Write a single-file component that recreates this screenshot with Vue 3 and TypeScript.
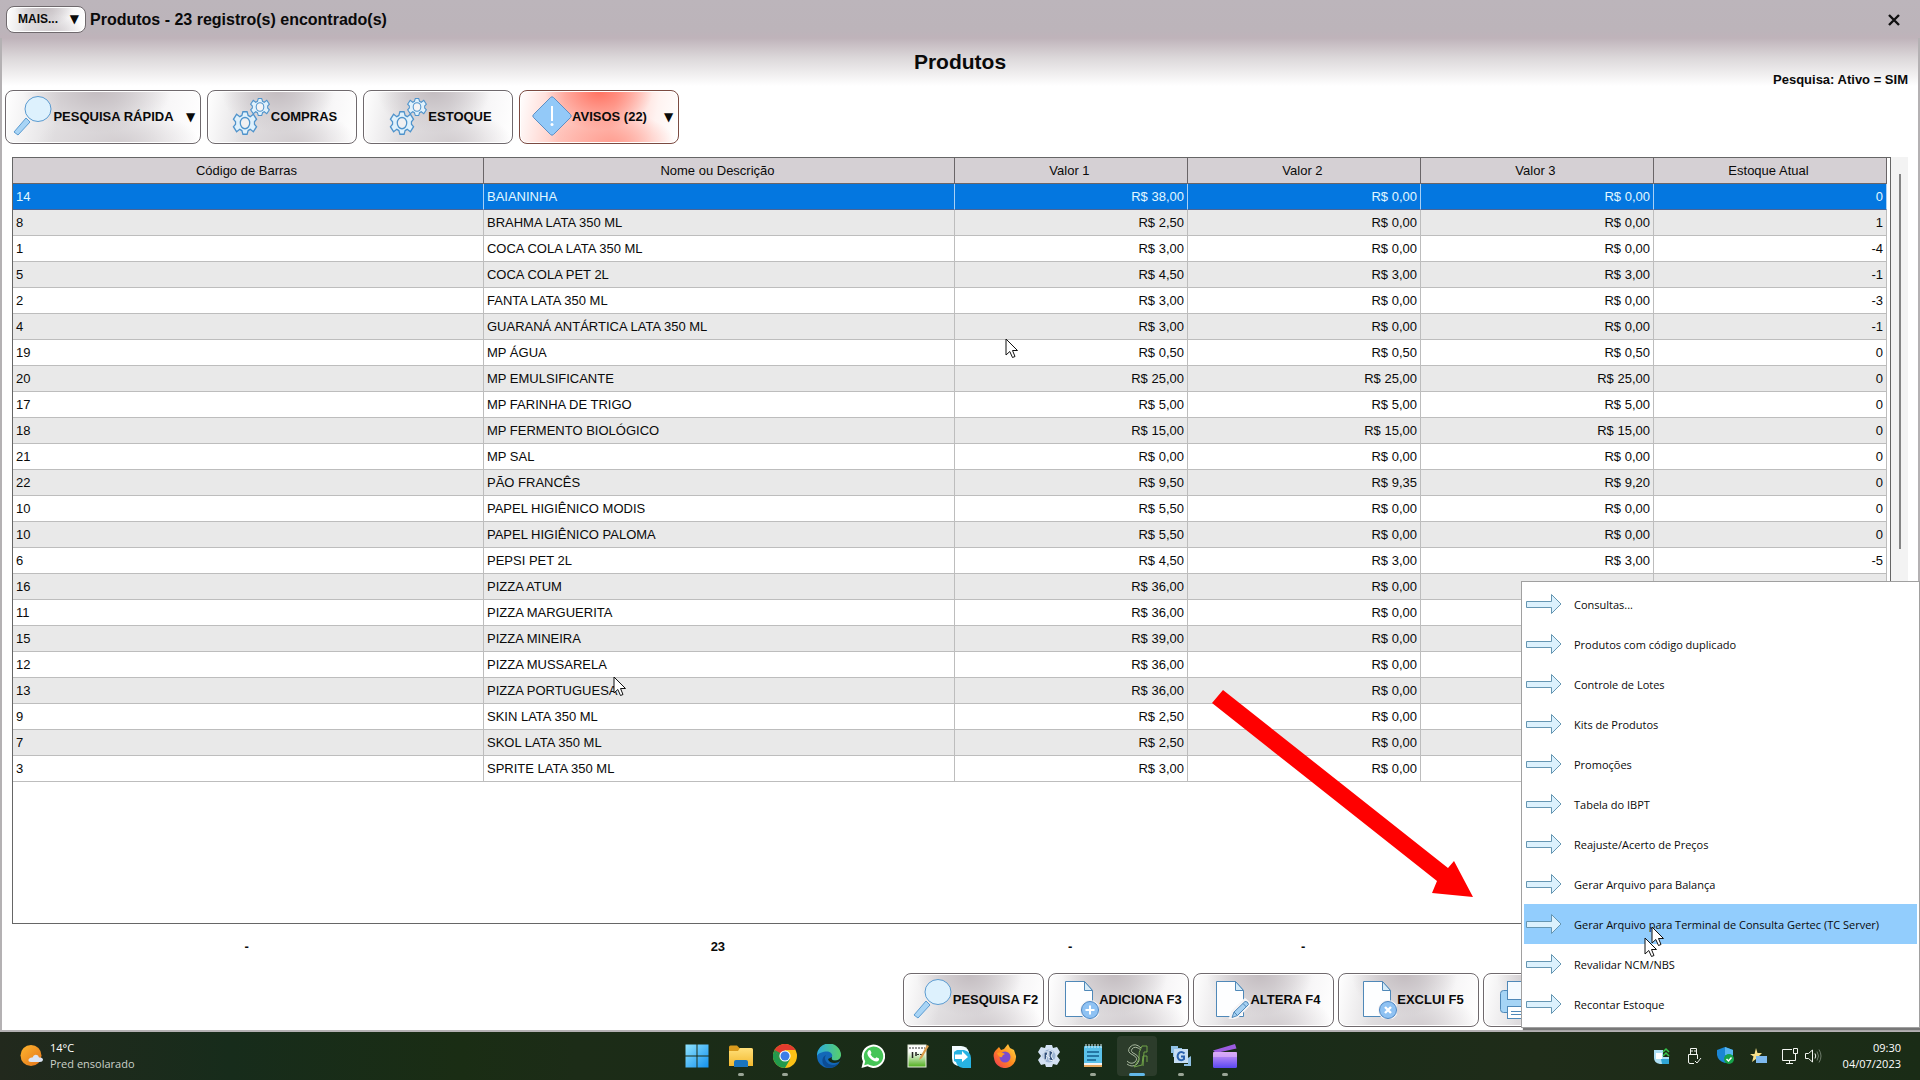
<script setup lang="ts">
interface Product {
  code: string
  name: string
  v1: string
  v2: string
  v3?: string
  stock?: number
}

const p = (code: string, name: string, v1: string, v2: string, v3?: string, stock?: number): Product => ({
  code, name, v1, v2, v3, stock,
})
const money = (v?: string): string => (v === undefined ? '' : `R$ ${v}`)

const products: Product[] = [
  p('14', 'BAIANINHA', '38,00', '0,00', '0,00', 0),
  p('8', 'BRAHMA LATA 350 ML', '2,50', '0,00', '0,00', 1),
  p('1', 'COCA COLA LATA 350 ML', '3,00', '0,00', '0,00', -4),
  p('5', 'COCA COLA PET 2L', '4,50', '3,00', '3,00', -1),
  p('2', 'FANTA LATA 350 ML', '3,00', '0,00', '0,00', -3),
  p('4', 'GUARANÁ ANTÁRTICA LATA 350 ML', '3,00', '0,00', '0,00', -1),
  p('19', 'MP ÁGUA', '0,50', '0,50', '0,50', 0),
  p('20', 'MP EMULSIFICANTE', '25,00', '25,00', '25,00', 0),
  p('17', 'MP FARINHA DE TRIGO', '5,00', '5,00', '5,00', 0),
  p('18', 'MP FERMENTO BIOLÓGICO', '15,00', '15,00', '15,00', 0),
  p('21', 'MP SAL', '0,00', '0,00', '0,00', 0),
  p('22', 'PÃO FRANCÊS', '9,50', '9,35', '9,20', 0),
  p('10', 'PAPEL HIGIÊNICO MODIS', '5,50', '0,00', '0,00', 0),
  p('10', 'PAPEL HIGIÊNICO PALOMA', '5,50', '0,00', '0,00', 0),
  p('6', 'PEPSI PET 2L', '4,50', '3,00', '3,00', -5),
  p('16', 'PIZZA ATUM', '36,00', '0,00'),
  p('11', 'PIZZA MARGUERITA', '36,00', '0,00'),
  p('15', 'PIZZA MINEIRA', '39,00', '0,00'),
  p('12', 'PIZZA MUSSARELA', '36,00', '0,00'),
  p('13', 'PIZZA PORTUGUESA', '36,00', '0,00'),
  p('9', 'SKIN LATA 350 ML', '2,50', '0,00'),
  p('7', 'SKOL LATA 350 ML', '2,50', '0,00'),
  p('3', 'SPRITE LATA 350 ML', '3,00', '0,00'),
]

const columns = ['Código de Barras', 'Nome ou Descrição', 'Valor 1', 'Valor 2', 'Valor 3', 'Estoque Atual']
const totals = ['-', '23', '-', '-']

const tools = [
  { label: 'PESQUISA RÁPIDA', icon: 'search', kind: 'wide', drop: true },
  { label: 'COMPRAS', icon: 'gears', kind: 'plain', drop: false },
  { label: 'ESTOQUE', icon: 'gears', kind: 'plain', drop: false },
  { label: 'AVISOS (22)', icon: 'warn', kind: 'alert', drop: true },
]

const actions = [
  { label: 'PESQUISA F2', icon: 'search' },
  { label: 'ADICIONA F3', icon: 'doc-add' },
  { label: 'ALTERA F4', icon: 'doc-edit' },
  { label: 'EXCLUI F5', icon: 'doc-del' },
]

const menu = [
  'Consultas...',
  'Produtos com código duplicado',
  'Controle de Lotes',
  'Kits de Produtos',
  'Promoções',
  'Tabela do IBPT',
  'Reajuste/Acerto de Preços',
  'Gerar Arquivo para Balança',
  'Gerar Arquivo para Terminal de Consulta Gertec (TC Server)',
  'Revalidar NCM/NBS',
  'Recontar Estoque',
]
const activeItem = 8

const apps = [
  { id: 'windows', state: '' },
  { id: 'explorer', state: 'open' },
  { id: 'chrome', state: 'open' },
  { id: 'edge', state: '' },
  { id: 'whatsapp', state: '' },
  { id: 'editor', state: '' },
  { id: 'remote', state: '' },
  { id: 'firefox', state: '' },
  { id: 'cog', state: '' },
  { id: 'notepad', state: 'open' },
  { id: 'sg', state: 'active' },
  { id: 'gsync', state: 'open' },
  { id: 'clip', state: 'open' },
]
const tray = ['tray-remote', 'tray-usb', 'tray-shield', 'tray-star']
</script>

<template>
  <div class="desktop">
    <svg class="defs" width="0" height="0" aria-hidden="true">
      <defs>
        <linearGradient id="gWin" x1="0" y1="0" x2="1" y2="1"><stop offset="0" stop-color="#8fe3ff" /><stop offset="1" stop-color="#1391ee" /></linearGradient>
        <linearGradient id="gFolder" x1="0" y1="0" x2="0" y2="1"><stop offset="0" stop-color="#ffe07a" /><stop offset="1" stop-color="#f3b92f" /></linearGradient>
        <linearGradient id="gEdge" x1="0" y1="0" x2="1" y2="0"><stop offset="0" stop-color="#2aa9e0" /><stop offset="1" stop-color="#58d06a" /></linearGradient>
        <linearGradient id="gFox" x1="1" y1="0" x2="0" y2="1"><stop offset="0" stop-color="#ffe14a" /><stop offset="0.5" stop-color="#ff8a1e" /><stop offset="1" stop-color="#f0305c" /></linearGradient>
        <linearGradient id="gClip" x1="0" y1="0" x2="0" y2="1"><stop offset="0" stop-color="#d59bf5" /><stop offset="1" stop-color="#5a48f0" /></linearGradient>
        <linearGradient id="gGreen" x1="0" y1="0" x2="0" y2="1"><stop offset="0.3" stop-color="#ffffff" /><stop offset="1" stop-color="#4fae1c" /></linearGradient>
        <linearGradient id="gSun" x1="0" y1="0" x2="1" y2="1"><stop offset="0" stop-color="#ffb52e" /><stop offset="1" stop-color="#e2741b" /></linearGradient>
        <path id="gearShape" d="M-2-9h4l1 3 2 1 3-2 3 4-2 2v2l2 2-3 4-3-2-2 1-1 3h-4l-1-3-2-1-3 2-3-4 2-2v-2l-2-2 3-4 3 2 2-1z" />
      </defs>
      <symbol id="search" viewBox="0 0 40 40">
        <path d="M13 22 17 26 5 39 1 36Z" fill="#a8d4f5" stroke="#5b9bd0" />
        <ellipse cx="25" cy="13" rx="13" ry="12.5" fill="#ddf1fd" stroke="#5b9bd0" />
      </symbol>
      <symbol id="gears" viewBox="0 0 40 40" fill="#dff1fc" stroke="#4f93cb" stroke-width="1.2">
        <g transform="translate(29 11) scale(0.85 0.95)"><use href="#gearShape" /><circle r="4.5" fill="#f4f4f5" /></g>
        <g transform="translate(14 27) scale(1.05 1.25)"><use href="#gearShape" /><circle r="4.500" fill="#f1f0f1" /></g>
      </symbol>
      <symbol id="warn" viewBox="0 0 40 40">
        <path d="M18.500 1.500Q20 0 21.500 1.500L38.500 18.500Q40 20 38.500 21.500L21.500 38.500Q20 40 18.500 38.500L1.500 21.500Q0 20 1.500 18.500Z" fill="#93c9f8" stroke="#5d8fc4" />
        <path d="M20 10V25" stroke="#fff" stroke-width="2" /><circle cx="20" cy="28.500" r="1.500" fill="#fff" />
      </symbol>
      <symbol id="page" viewBox="0 0 40 40">
        <path d="M6.500 2.500H25.500L33.500 11.500V37.500H6.500Z" fill="#fdfeff" stroke="#4f88b8" />
        <path d="M25.500 2.500V11.500H33.500Z" fill="#d5ebf8" stroke="#4f88b8" />
      </symbol>
      <symbol id="doc-add" viewBox="0 0 40 40">
        <use href="#page" /><circle cx="31" cy="31" r="10" fill="#f4f2f3" /><circle cx="31" cy="31" r="8.500" fill="#8fc2f3" stroke="#4f88c4" />
        <path d="M31 26.500V35.500M26.500 31H35.500" stroke="#fff" stroke-width="2" />
      </symbol>
      <symbol id="doc-del" viewBox="0 0 40 40">
        <use href="#page" /><circle cx="31" cy="31" r="10" fill="#f4f2f3" /><circle cx="31" cy="31" r="8.500" fill="#8fc2f3" stroke="#4f88c4" />
        <path d="M28 28 34 34M34 28 28 34" stroke="#fff" stroke-width="2.400" />
      </symbol>
      <symbol id="doc-edit" viewBox="0 0 40 40">
        <use href="#page" /><path d="M21 39 23 33 35 21.500 39 25 27 37Z" fill="#a5d0f2" stroke="#f6f4f5" stroke-width="4" />
        <path d="M22 38.500 24 33 35 22.500Q38 22 38.500 25.500L27.500 36.500ZM24 33 27.500 36.500M33 24.500 36.500 28" fill="#a5d0f2" stroke="#4f88b8" />
      </symbol>
      <symbol id="printer" viewBox="0 0 40 40" stroke="#4f88b8">
        <rect x="1.500" y="10.500" width="37" height="22" rx="3" fill="#a5d4f5" />
        <rect x="8.500" y="1.500" width="23" height="18" fill="#f4faff" />
        <rect x="8.500" y="26.500" width="23" height="12" fill="#fff" /><path d="M12 31.500H28M12 34.500H28" />
      </symbol>
      <symbol id="arrow" viewBox="0 0 36 22">
        <path d="M0.500 8.500H25.500V1.500L35 11 25.500 20.500V14.500H0.500Z" fill="#dcf1fd" stroke="#6596b2" />
      </symbol>
      <symbol id="pointer" viewBox="0 0 14 21">
        <path d="M1 1V17L4.800 13.500 7.500 19.500 10 18.500 7.500 12.500H12.500Z" fill="#fff" stroke="#111" />
      </symbol>

      <symbol id="windows" viewBox="0 0 24 24" fill="url(#gWin)"><path d="M0.500 0.500H11.500V11.500H0.500ZM12.500 0.500H23.500V11.500H12.500ZM0.500 12.500H11.500V23.500H0.500ZM12.500 12.500H23.500V23.500H12.500Z" /></symbol>
      <symbol id="explorer" viewBox="0 0 24 24">
        <path d="M0 3Q0 1.500 1.500 1.500H8L10.500 4H22Q24 4 24 6V22H0Z" fill="#d99a1c" /><path d="M0 7H9L11 4H22Q24 4 24 6V22H0Z" fill="url(#gFolder)" />
        <path d="M5 23V18Q5 16 7 16H17Q19 16 19 18V23Z" fill="#1b74bd" />
      </symbol>
      <symbol id="chrome" viewBox="0 0 24 24">
        <circle cx="12" cy="12" r="12" fill="#fbc116" /><path d="M12 12 1.600 6A12 12 0 0 1 22.400 6H12Z" fill="#e33b2e" />
        <path d="M1.600 6A12 12 0 0 0 12 24L17.200 15 12 12Z" fill="#229a4c" /><path d="M1.600 6 6.800 15 12 12 12 6Z" fill="#e33b2e" /><path d="M1.600 6 6.800 15 9 10Z" fill="#229a4c" />
        <circle cx="12" cy="12" r="5.600" fill="#fff" /><circle cx="12" cy="12" r="4.500" fill="#3c7de8" />
      </symbol>
      <symbol id="edge" viewBox="0 0 24 24">
        <circle cx="12" cy="12" r="12" fill="#1368b8" /><path d="M0 12A12 12 0 0 1 24 11C24 15 21 16.500 18 16.500S14 15 15 13 14 7.500 10 7.500 1 9 0 12Z" fill="url(#gEdge)" />
        <path d="M9 11C6 15 10 21 16 21 19 21 21.500 19.500 22.500 18 20 23 14 24.500 10 23.500 4 21 4 13 9 11Z" fill="#0c4c93" /><path d="M15 13C14 15 15 16.500 18 16.500 21 16.500 23.500 15 24 12V16C21 20 12 20 11 15Z" fill="#172b18" />
      </symbol>
      <symbol id="whatsapp" viewBox="0 0 24 24">
        <path d="M0.500 24 2 17.500A11.700 11.700 0 1 1 6.500 22.300Z" fill="#fff" /><path d="M3.200 21.300 4.200 17.200A9.700 9.700 0 1 1 7 20.200Z" fill="#45c557" />
        <path d="M7.500 6.500Q9 5.500 9.700 7L10.500 9 9.600 10.500Q11 13.300 14 14.500L15.500 13.300 18 14.500Q18.500 17 15.500 17.600C11 17.500 6 12 6.300 8.800Z" fill="#fff" />
      </symbol>
      <symbol id="editor" viewBox="0 0 24 24">
        <rect x="3" y="1" width="18" height="22" fill="url(#gGreen)" stroke="#e8eee0" /><path d="M7.500 8V14M11 8V12" stroke="#222" stroke-width="1.500" /><path d="M12 10.500H17M4 4H20" stroke="#333" stroke-dasharray="2 1" />
        <path d="M22 1 24 2 17 14 14 16 15 13Z" fill="#d99a4a" />
      </symbol>
      <symbol id="remote" viewBox="0 0 24 24">
        <path d="M3 2H12Q18 2 20 8V22H11Q3 22 3 14Z" fill="#f2fbff" /><path d="M8 6H15Q22 8 22 14V24H14Q8 23 7 18L5 17V8Z" fill="#27b3e2" />
        <path d="M6 10.500H13V7L19 13 13 18V15H6Z" fill="#fff" />
      </symbol>
      <symbol id="firefox" viewBox="0 0 24 24">
        <path d="M3 6 6 3 8 6 11 5 15 0 17 4 21 6 23 12A11 11 0 0 1 1 14C0 11 1 8 3 6Z" fill="url(#gFox)" />
        <circle cx="12" cy="13" r="5.500" fill="#7a4bd0" /><path d="M4 9Q8 7 12 10 9 11 9 13 6 14 4 9Z" fill="#ff9a24" />
      </symbol>
      <symbol id="cog" viewBox="0 0 24 24">
        <path d="M9 1H15L16 4 20 3 23 8 20 12 23 16 20 21 16 20 15 23H9L8 20 4 21 1 16 4 12 1 8 4 3 8 4Z" fill="#d3e1f3" /><circle cx="12" cy="12" r="6.500" fill="#9db5d4" />
        <path d="M7 8H11L9 16H7ZM12 6 16 8 14 12 17 17 12 16ZM9 11 13 14" fill="#33517c" stroke="#e8f1fb" />
      </symbol>
      <symbol id="notepad" viewBox="0 0 24 24">
        <rect x="3" y="2" width="18" height="20" rx="1" fill="#5bc2ea" /><path d="M3 20H21V23H3Z" fill="#e7a95e" /><path d="M3 20H21" stroke="#f4f4f4" stroke-width="2" />
        <path d="M5 0V4M8 0V4M11 0V4M14 0V4M17 0V4M20 0V4" stroke="#d9f1fb" /><path d="M6 8H18M6 12H18M6 16H15" stroke="#145e8d" stroke-width="1.500" />
      </symbol>
      <symbol id="sg" viewBox="0 0 24 24" fill="none" stroke="#a8b89f">
        <path d="M16 4Q10-2 5 3 1 8 8 11 14 14 10 18 6 21 2 17M16 6Q10 1 7 5 5 8 10 10 17 14 12 20 7 24 2 20" /><path d="M22 2H17Q13 8 14 15L9 23 17 21 18 12H22V18M22 2V8H19L18 22" stroke="#6fa247" />
      </symbol>
      <symbol id="gsync" viewBox="0 0 24 24">
        <path d="M2 2H9V4H13V7H6V13H4V9H2ZM22 12V22H15V20H19V14Z" fill="#8fc0e4" /><rect x="5" y="5" width="14" height="14" fill="#c6def4" />
        <path d="M15.500 9.500Q12 6.500 9.500 9.500 7.500 13 10 15.500 13 17 15 15V12.500H12" fill="none" stroke="#2a62ae" stroke-width="2" />
      </symbol>
      <symbol id="clip" viewBox="0 0 24 24">
        <path d="M0 6.500 22 0 23.500 4.500 3 9Z" fill="#9c5ce0" /><rect x="0" y="8" width="24" height="16" rx="1.500" fill="url(#gClip)" /><path d="M0 8H24V13H0Z" fill="#e0b6f8" opacity=".6" />
      </symbol>

      <symbol id="tray-remote" viewBox="0 0 18 18"><path d="M1 3H10V10H16V17H7Q1 16 1 11Z" fill="#aee0f5" /><path d="M3 6H9V12H3Z" fill="#fff" /><path d="M8 12H16V17H9Z" fill="#2fa6d6" /><path d="M10 5 13 2 16 5M10 9 13 6 16 9" fill="none" stroke="#36c34a" stroke-width="1.500" /></symbol>
      <symbol id="tray-usb" viewBox="0 0 18 18" fill="none" stroke="#f2f5f0"><path d="M5.500 7.500V1.500H11.500V7.500M3.500 7.500H12.500V12M3.500 7.500V15Q3.500 16.500 5 16.500H9M7 3V5M10 3V5M10 14 12 16 16 11" /></symbol>
      <symbol id="tray-shield" viewBox="0 0 18 18"><path d="M8 0 16 3V8Q15 14 8 16 1 14 0 8V3Z" fill="#1b86d4" /><path d="M8 0 16 3V8H8Z" fill="#56b5f0" /><circle cx="12" cy="12" r="5" fill="#16a34a" /><path d="M9.500 12 11.500 14 14.500 10.500" fill="none" stroke="#fff" stroke-width="1.500" /></symbol>
      <symbol id="tray-star" viewBox="0 0 18 18"><path d="M7 1 8.500 6H13L9.500 9.500 10.500 15 7 12 3 15 4.500 9.500 1 7H5.500Z" fill="#f6e08a" /><rect x="7" y="9" width="11" height="7" fill="#7db9ee" /></symbol>
      <symbol id="tray-net" viewBox="0 0 18 18" fill="none" stroke="#f2f5f0"><path d="M11 2.500H1.500V13.500H14.500V8M5 16.500H12M8.500 13.500V16.500M12.500 1.500H16.500V6.500H12.500ZM14.500 6.500V9" /></symbol>
      <symbol id="tray-vol" viewBox="0 0 18 18" fill="none" stroke="#f2f5f0"><path d="M1.500 6.500H4.500L8.500 3V15L4.500 11.500H1.500ZM11 6.500Q12.500 9 11 11.500" /><path d="M13 4.500Q16 9 13 13.500M15 2.500Q19 9 15 15.500" stroke="#6f7d6c" /></symbol>
      <symbol id="weather" viewBox="0 0 24 22"><circle cx="11" cy="10.500" r="10.500" fill="url(#gSun)" /><path d="M11 17Q8 17 8.500 14.500 10 12 12.500 12.500 14 8.500 18 10.500L19 12.500Q23 12 23 15 22.500 17 20 17Z" fill="#dbe4f3" /></symbol>
    </svg>

    <main class="window">
      <header class="titlebar">
        <button class="gloss more" type="button">MAIS...<span class="caret">▼</span></button>
        <span class="caption">Produtos - 23 registro(s) encontrado(s)</span>
        <button class="close" type="button" aria-label="Fechar">
          <svg width="12" height="12" viewBox="0 0 12 12"><path d="M1 1 11 11M11 1 1 11" stroke="#111" stroke-width="2.400" /></svg>
        </button>
      </header>

      <div class="body">
        <div class="heading">
          <h1>Produtos</h1>
          <p>Pesquisa: Ativo = SIM</p>
        </div>

        <nav class="toolbar">
          <button v-for="t in tools" :key="t.label" type="button" class="gloss tool" :class="t.kind">
            <span class="face"><svg class="ico"><use :href="'#' + t.icon" /></svg>{{ t.label }}</span>
            <span v-if="t.drop" class="caret drop">▼</span>
          </button>
        </nav>

        <div class="sheet">
          <div class="grid">
            <table>
              <colgroup>
                <col class="c-wide" /><col class="c-wide" /><col /><col /><col /><col />
              </colgroup>
              <thead>
                <tr><th v-for="c in columns" :key="c" scope="col">{{ c }}</th></tr>
              </thead>
              <tbody>
                <tr v-for="(r, i) in products" :key="r.name" :class="{ selected: i === 0 }">
                  <td>{{ r.code }}</td>
                  <td>{{ r.name }}</td>
                  <td class="num">{{ money(r.v1) }}</td>
                  <td class="num">{{ money(r.v2) }}</td>
                  <td class="num">{{ money(r.v3) }}</td>
                  <td class="num">{{ r.stock }}</td>
                </tr>
              </tbody>
            </table>
          </div>
          <div class="scroll"><div class="thumb"></div></div>
        </div>

        <div class="totals"><span v-for="(t, i) in totals" :key="i">{{ t }}</span></div>

        <div class="actions">
          <button v-for="a in actions" :key="a.label" type="button" class="gloss action plain">
            <span class="face"><svg class="ico"><use :href="'#' + a.icon" /></svg>{{ a.label }}</span>
          </button>
          <button type="button" class="gloss action print" aria-label="Imprime"><svg class="ico"><use href="#printer" /></svg></button>
        </div>
      </div>

      <div class="menu" role="menu">
        <button v-for="(m, i) in menu" :key="m" type="button" role="menuitem" :class="{ hot: i === activeItem }">
          <svg class="arr"><use href="#arrow" /></svg>{{ m }}
        </button>
      </div>

      <svg class="callout" viewBox="0 0 262 208"><path d="M12 1 237 179 243 172 262 208 221 204 226 192 1 14Z" fill="#f00" /></svg>
      <svg class="pointer at-grid"><use href="#pointer" /></svg>
      <svg class="pointer at-row"><use href="#pointer" /></svg>
      <svg class="pointer at-item"><use href="#pointer" /></svg>
      <svg class="pointer at-next"><use href="#pointer" /></svg>
    </main>

    <footer class="taskbar">
      <div class="weather">
        <svg class="sun"><use href="#weather" /></svg>
        <div><div>14°C</div><div class="dim">Pred ensolarado</div></div>
      </div>
      <div class="apps">
        <button v-for="a in apps" :key="a.id" type="button" :class="a.state" :aria-label="a.id">
          <svg class="app"><use :href="'#' + a.id" /></svg>
        </button>
      </div>
      <div class="tray">
        <svg v-for="t in tray" :key="t" class="t"><use :href="'#' + t" /></svg>
        <div class="pair"><svg class="t"><use href="#tray-net" /></svg><svg class="t"><use href="#tray-vol" /></svg></div>
        <div class="clock"><div>09:30</div><div>04/07/2023</div></div>
      </div>
    </footer>
  </div>
</template>

<style>
body {
  margin: 0;
}
</style>

<style scoped>
* {
  box-sizing: border-box;
}
.desktop {
  display: flex;
  flex-direction: column;
  min-height: 100vh;
  font-family: "Liberation Sans", Arial, sans-serif;
  font-size: 13px;
  color: #0a0a0a;
}
.defs {
  position: absolute;
}
button {
  font: inherit;
  color: inherit;
  margin: 0;
  padding: 0;
  border: 0;
  background: none;
}
.window {
  position: relative;
  flex: 1;
  display: flex;
  flex-direction: column;
  background: #fff;
}
.titlebar {
  display: flex;
  align-items: center;
  height: 38px;
  padding: 0 18px 0 6px;
  background: linear-gradient(#bcb5bb, #bcb4ba 30px, #bfb3ba);
}
.gloss {
  font-weight: bold;
  border: 1px solid #6f696d;
  border-radius: 8px;
  box-shadow: inset 0 0 0 1px #fff;
  background:
    radial-gradient(ellipse 38% 80% at 47% 0, #c3bcc0, transparent),
    radial-gradient(ellipse 42% 65% at 58% 100%, #d3ced1, transparent),
    linear-gradient(100deg, #fff 0, #e2e0e2 28%, #e2e0e2 55%, #f8f7f8 82%, #fff);
}
.more {
  display: flex;
  align-items: center;
  justify-content: space-between;
  width: 80px;
  height: 27px;
  padding: 0 6px 0 11px;
  font-size: 12px;
}
.caret {
  font-family: "DejaVu Sans", sans-serif;
  font-size: 12px;
  font-weight: normal;
}
.caption {
  flex: 1;
  padding: 2px 0 0 4px;
  font-size: 16px;
  font-weight: bold;
}
.close {
  display: flex;
  padding: 4px 2px 2px;
}
.body {
  flex: 1;
  display: flex;
  flex-direction: column;
  padding-bottom: 3px;
  border: solid #b4b1b3;
  border-width: 0 2px 2px;
  background: linear-gradient(#bfb3ba, #dcd8da 20px, #fff 48px);
}
.heading {
  display: grid;
  height: 52px;
}
.heading h1,
.heading p {
  grid-area: 1 / 1;
  margin: 0;
  font-weight: bold;
}
.heading h1 {
  justify-self: center;
  font-size: 21px;
  line-height: 48px;
}
.heading p {
  align-self: end;
  justify-self: end;
  line-height: 16px;
  padding: 0 10px 2px 0;
}
.toolbar {
  display: flex;
  gap: 6px;
  padding: 0 3px;
}
.tool {
  display: flex;
  align-items: stretch;
  width: 150px;
  height: 54px;
}
.tool.wide {
  width: 196px;
}
.tool.alert {
  width: 160px;
  border-color: #7c4a41;
  background:
    radial-gradient(ellipse 34% 75% at 50% 0, #ff7261, transparent),
    radial-gradient(ellipse 40% 60% at 58% 100%, #ff9f92, transparent),
    linear-gradient(100deg, #fff 0, #ffc9c1 28%, #ffc0b7 58%, #fff3f1 84%, #fff);
}
.face {
  flex: 1;
  display: flex;
  align-items: center;
  justify-content: center;
  padding-bottom: 2px;
  white-space: nowrap;
}
.plain .face {
  padding-left: 4px;
}
.ico {
  flex: none;
  width: 40px;
  height: 40px;
}
.drop {
  align-self: center;
  width: 19px;
}
.sheet {
  flex: 1;
  display: flex;
  margin: 13px 10px 0;
}
.grid {
  flex: 1;
  border: 1px solid #666;
  padding-right: 3px;
}
table {
  width: 100%;
  table-layout: fixed;
  border-collapse: separate;
  border-spacing: 0;
}
.c-wide {
  width: 25.133%;
}
th,
td {
  height: 26px;
  padding: 1px 3px 0;
  overflow: hidden;
  white-space: nowrap;
  text-align: left;
  line-height: 24px;
  border-right: 1px solid #bdbdbd;
  border-bottom: 1px solid #bdbdbd;
}
th {
  padding: 0 4px 0 1px;
  font-weight: normal;
  text-align: center;
  background: #d5d0d4;
  border-color: #6a6568;
}
.num {
  text-align: right;
}
tbody tr:nth-child(even) {
  background: #e9e9e9;
}
.selected td {
  color: #e2f8ff;
  background: #0477e0;
  border-right-color: #a9d0f5;
  border-bottom-color: #4a6496;
}
.scroll {
  width: 17px;
  padding: 17px 0 0 8px;
  background: #f3f3f3;
}
.thumb {
  width: 2px;
  height: 375px;
  background: #858585;
}
.totals {
  display: grid;
  grid-template-columns: 471fr 471fr 233fr 233fr 233fr 233fr;
  margin: 0 32px 3px 9px;
  line-height: 46px;
  font-weight: bold;
  text-align: center;
}
.actions {
  display: grid;
  grid-template-columns: repeat(7, 141px);
  justify-content: end;
  gap: 4px;
  padding-right: 4px;
}
.action {
  display: flex;
  height: 54px;
}
.print {
  align-items: center;
  padding-left: 15px;
}
.menu {
  position: absolute;
  right: 0;
  bottom: 4px;
  display: flex;
  flex-direction: column;
  width: 399px;
  padding: 2px 2px 3px;
  border: 1px solid #a0a0a0;
  background: #fff;
  box-shadow: 2px 2px 1px #777;
  font-family: "Open Sans", "Noto Sans", sans-serif;
  font-size: 11px;
}
.menu button {
  display: flex;
  align-items: center;
  gap: 12px;
  height: 40px;
  padding-left: 2px;
  white-space: nowrap;
}
.menu .hot {
  background: #92cdfd;
}
.arr {
  width: 36px;
  height: 22px;
}
.callout {
  position: absolute;
  left: 1211px;
  top: 689px;
  width: 262px;
  height: 208px;
}
.pointer {
  position: absolute;
  width: 14px;
  height: 21px;
}
.at-grid {
  left: 1005px;
  top: 338px;
}
.at-row {
  left: 613px;
  top: 676px;
}
.at-item {
  left: 1651px;
  top: 926px;
}
.at-next {
  left: 1644px;
  top: 937px;
}
.taskbar {
  display: grid;
  grid-template-columns: 1fr auto 1fr;
  align-items: center;
  height: 48px;
  background: linear-gradient(90deg, #22291d, #172c1b 12%, #1a2d14 24%, #1c2c17 30%, #172c18 60%, #1f2c19 80%, #1a2c16);
  color: #fff;
  font-family: "Open Sans", "Noto Sans", sans-serif;
  font-size: 11px;
  line-height: 16px;
}
.weather {
  display: flex;
  align-items: center;
  gap: 6px;
  padding-left: 20px;
}
.sun {
  width: 24px;
  height: 22px;
}
.dim {
  color: #cbd1c9;
}
.apps {
  display: flex;
  padding-left: 2px;
}
.apps button {
  position: relative;
  display: flex;
  align-items: center;
  justify-content: center;
  width: 40px;
  height: 40px;
  margin: 0 2px;
  border-radius: 4px;
}
.app {
  width: 24px;
  height: 24px;
}
.apps .active {
  background: #2c3c2b;
}
.apps .open::after,
.apps .active::after {
  content: "";
  position: absolute;
  bottom: 0;
  width: 6px;
  height: 3px;
  border-radius: 2px;
  background: #9aa596;
}
.apps .active::after {
  width: 16px;
  background: #62b8e8;
}
.tray {
  display: flex;
  align-items: center;
  justify-content: flex-end;
  gap: 14px;
  padding-right: 19px;
}
.t {
  width: 18px;
  height: 18px;
}
.pair {
  display: flex;
  gap: 5px;
}
.clock {
  width: 65px;
  text-align: right;
}
</style>
